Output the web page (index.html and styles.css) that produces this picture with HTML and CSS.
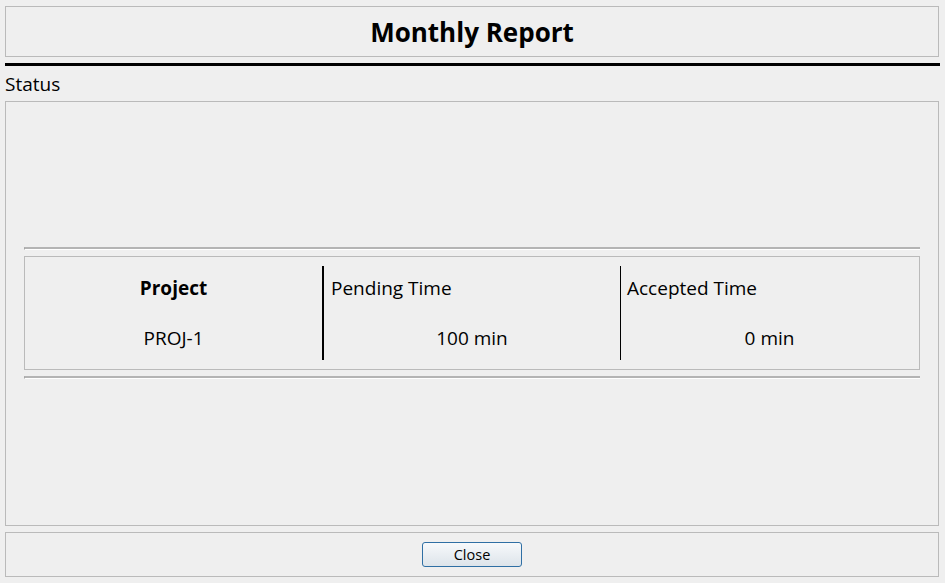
FILE: index.html
```html
<!DOCTYPE html>
<html lang="en">
<head>
<meta charset="utf-8">
<title>Monthly Report</title>
<link rel="stylesheet" href="styles.css">
</head>
<body>
<div class="window">
  <div class="header"><h1 class="title">Monthly Report</h1></div>
  <div class="rule"></div>
  <div class="status-label">Status</div>
  <div class="status-frame">
    <div class="sep"></div>
    <div class="report">
      <div class="col col-project">
        <div class="cell head bold">Project</div>
        <div class="cell center">PROJ-1</div>
      </div>
      <div class="col col-pending">
        <div class="cell head">Pending Time</div>
        <div class="cell center">100 min</div>
      </div>
      <div class="col col-accepted">
        <div class="cell head">Accepted Time</div>
        <div class="cell center">0 min</div>
      </div>
    </div>
    <div class="sep sep-bottom"></div>
  </div>
  <div class="footer">
    <button class="btn" type="button">Close</button>
  </div>
</div>
</body>
</html>
```
FILE: styles.css
```css
html, body {
  margin: 0;
  padding: 0;
  background: #efefef;
}
body {
  font-family: "Open Sans", "Noto Sans", "DejaVu Sans", sans-serif;
  color: #000;
  width: 945px;
  height: 583px;
  overflow: hidden;
}
.window {
  display: flex;
  flex-direction: column;
  padding: 6px 6px 0 5px;
}
.header {
  height: 51px;
  box-sizing: border-box;
  border: 1px solid #bababa;
  padding-top: 2px;
}
.title {
  margin: 0;
  font-size: 26px;
  font-weight: 700;
  line-height: 47px;
  text-align: center;
}
.rule {
  margin-top: 6px;
  height: 3px;
  background: #000;
  margin-right: -1px;
}
.status-label {
  font-size: 19px;
  line-height: 33px;
  padding-top: 2px;
}
.status-frame {
  height: 425px;
  box-sizing: border-box;
  border: 1px solid #bababa;
  padding: 145px 18px 0 18px;
  display: flex;
  flex-direction: column;
}
.sep {
  height: 3px;
  box-sizing: border-box;
  border-top: 2px solid #b4b4b4;
  border-bottom: 1px solid #ffffff;
  border-left: 1px solid #a0a0a0;
}
.sep-bottom {
  margin-top: 6px;
}
.report {
  margin-top: 6px;
  height: 114px;
  box-sizing: border-box;
  border: 1px solid #bababa;
  padding: 9px 0;
  display: grid;
  grid-template-columns: 297px 298px 299px;
}
.col {
  display: flex;
  flex-direction: column;
  gap: 24px;
  padding: 9px 0 9px;
  box-sizing: border-box;
}
.col-pending {
  border-left: 2px solid #000;
  padding-left: 7px;
}
.col-accepted {
  border-left: 1px solid #000;
  padding-left: 6px;
}
.cell {
  font-size: 19px;
  line-height: 26px;
  white-space: nowrap;
}
.col-project .cell {
  text-align: center;
}
.bold {
  font-weight: 700;
}
.center {
  text-align: center;
}
.col-pending .center,
.col-accepted .center {
  margin-left: -7px;
}
.footer {
  margin-top: 6px;
  height: 45px;
  box-sizing: border-box;
  border: 1px solid #bababa;
  display: flex;
  justify-content: center;
  align-items: flex-start;
  padding-top: 9px;
}
.btn {
  width: 100px;
  height: 25px;
  box-sizing: border-box;
  border: 1px solid #2f6fa4;
  border-radius: 3px;
  background: linear-gradient(#f7f9fb, #dde4ea);
  font-family: "Open Sans", "Noto Sans", "DejaVu Sans", sans-serif;
  font-size: 14.5px;
  color: #000;
  padding: 0;
  line-height: 23px;
}
```
